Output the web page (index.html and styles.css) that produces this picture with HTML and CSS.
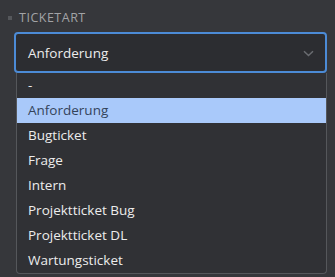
FILE: index.html
```html
<!DOCTYPE html>
<html lang="de">
<head>
<meta charset="utf-8">
<link rel="stylesheet" href="styles.css">
</head>
<body>
<div class="field">
  <div class="label"><span class="marker"></span><span class="label-text">Ticketart</span></div>
  <div class="select">
    <span class="value">Anforderung</span>
    <svg class="chevron" width="11" height="7" viewBox="0 0 11 7"><path d="M1 1.2 L5.5 5.5 L10 1.2" fill="none" stroke="#6a6c71" stroke-width="1.5"/></svg>
  </div>
  <ul class="options">
    <li class="option">-</li>
    <li class="option active">Anforderung</li>
    <li class="option">Bugticket</li>
    <li class="option">Frage</li>
    <li class="option">Intern</li>
    <li class="option">Projektticket Bug</li>
    <li class="option">Projektticket DL</li>
    <li class="option">Wartungsticket</li>
  </ul>
</div>
</body>
</html>
```
FILE: styles.css
```css
html, body {
  margin: 0;
  padding: 0;
  background: #36373b;
  font-family: "Open Sans", "Noto Sans", sans-serif;
}
.field {
  padding: 9px 8px 0 14px;
  width: 313px;
}
.label {
  display: flex;
  align-items: center;
  margin-left: -6px;
  height: 17px;
  gap: 6px;
}
.marker {
  width: 4px;
  height: 4px;
  background: #55575b;
}
.label-text {
  text-transform: uppercase;
  font-size: 12.5px;
  letter-spacing: 0.5px;
  color: #a2a3a6;
  margin-left: 1px;
}
.select {
  margin-top: 6px;
  height: 37px;
  border: 2px solid #4c8bd6;
  border-radius: 4px;
  background: #2c2d31;
  display: flex;
  align-items: center;
  justify-content: space-between;
  padding: 0 11px 0 12px;
}
.value {
  color: #ececec;
  font-size: 13.5px;
  font-weight: 500;
}
.chevron {
  margin-top: 1px;
}
.options {
  list-style: none;
  margin: 0 0 0 2px;
  padding: 0;
  border: 1px solid #55575b;
  border-top: none;
  border-radius: 0 0 4px 4px;
  background: #303135;
  overflow: hidden;
}
.option {
  height: 25px;
  line-height: 25px;
  padding-left: 11px;
  color: #ececec;
  font-size: 13.5px;
  font-weight: 500;
}
.option.active {
  background: #a9c9fa;
  color: #34445a;
}
```
